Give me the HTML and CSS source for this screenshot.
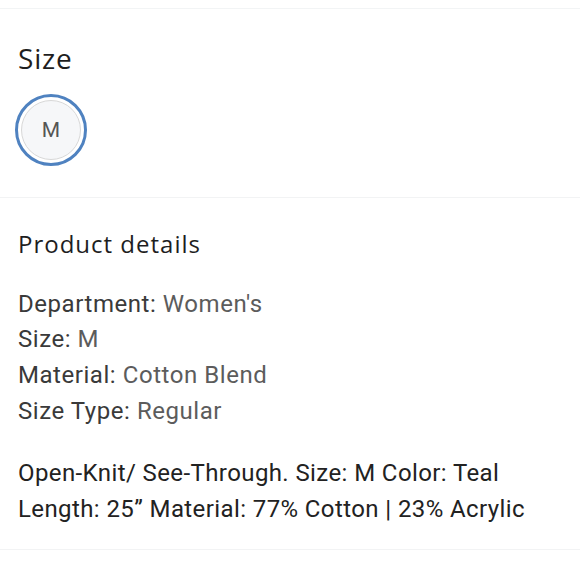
FILE: index.html
```html
<!DOCTYPE html>
<html>
<head>
<meta charset="utf-8">
<link rel="stylesheet" href="styles.css">
</head>
<body>
<div class="top-rule"></div>
<section class="size-section">
  <h2 class="size-title">Size</h2>
  <div class="size-options">
    <button class="size-chip selected"><span class="chip-inner">M</span></button>
  </div>
</section>
<section class="details-section">
  <h2 class="details-title">Product details</h2>
  <ul class="attr-list">
    <li><span class="attr-label">Department:</span> <span class="attr-value">Women's</span></li>
    <li><span class="attr-label">Size:</span> <span class="attr-value">M</span></li>
    <li><span class="attr-label">Material:</span> <span class="attr-value">Cotton Blend</span></li>
    <li><span class="attr-label">Size Type:</span> <span class="attr-value">Regular</span></li>
  </ul>
  <p class="description">Open-Knit/ See-Through. Size: M Color: Teal<br>Length: 25” Material: 77% Cotton | 23% Acrylic</p>
</section>
</body>
</html>
```
FILE: styles.css
```css
html, body {
  margin: 0;
  padding: 0;
  background: #ffffff;
}
body {
  font-family: Roboto, "Liberation Sans", sans-serif;
  width: 580px;
}
.top-rule {
  height: 8px;
  border-bottom: 1px solid #f2f4f5;
}
.size-section {
  padding: 34px 18px 31px;
  border-bottom: 1px solid #f2f3f4;
}
.size-title, .details-title {
  margin: 0;
  font-family: "Open Sans", sans-serif;
  font-weight: 400;
  color: #1e1e1e;
}
.size-title {
  font-size: 28px;
  line-height: 30px;
  letter-spacing: 0.8px;
}
.size-options {
  display: flex;
  margin-top: 21px;
}
.size-chip {
  width: 72px;
  height: 72px;
  border-radius: 50%;
  border: 3px solid #4f82c0;
  background: #ffffff;
  padding: 3px;
  margin: 0 0 0 -3px;
  box-sizing: border-box;
  display: flex;
}
.chip-inner {
  flex: 1;
  border-radius: 50%;
  border: 1px solid #d8d8d8;
  background: #f6f7f9;
  display: flex;
  align-items: center;
  justify-content: center;
  font-family: Roboto, sans-serif;
  font-size: 21px;
  color: #555555;
}
.details-section {
  padding: 31.6px 18px 22.5px;
  border-bottom: 1px solid #f2f3f4;
}
.details-title {
  font-size: 24px;
  line-height: 28px;
  letter-spacing: 1px;
}
.attr-list {
  list-style: none;
  margin: 29.1px 0 0;
  padding: 0;
  font-size: 24px;
  line-height: 35.7px;
  letter-spacing: 0.55px;
}
.attr-label {
  color: #3a3a3a;
}
.attr-value {
  color: #5c5c5c;
}
.description {
  margin: 25px 0 0;
  font-size: 24px;
  line-height: 36px;
  letter-spacing: 0.4px;
  color: #222222;
}
```
